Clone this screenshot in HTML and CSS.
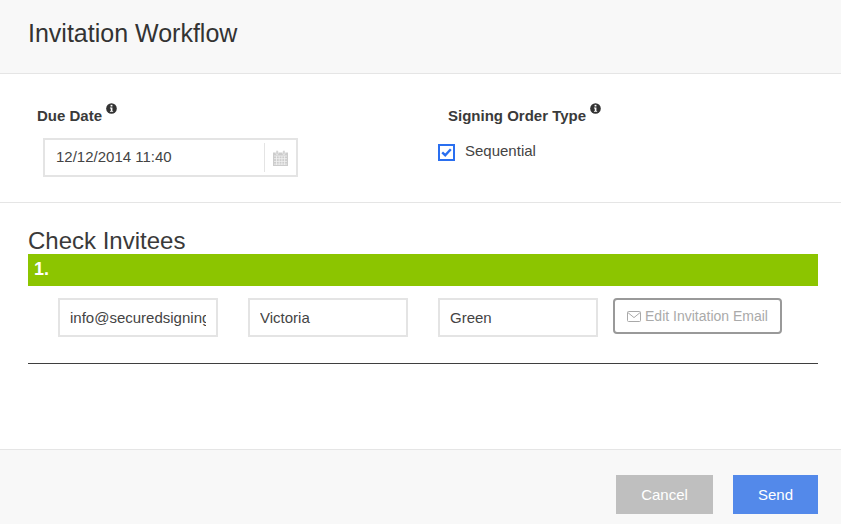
FILE: index.html
```html
<!DOCTYPE html>
<html lang="en">
<head>
<meta charset="utf-8">
<title>Invitation Workflow</title>
<link rel="stylesheet" href="styles.css">
</head>
<body>
<div class="modal">
  <header class="head"><h1 class="title">Invitation Workflow</h1></header>
  <section class="options">
    <div class="col col-date">
      <div class="label">Due Date<svg class="info" viewBox="0 0 12 12"><circle cx="6" cy="6" r="5.8" fill="#333"/><rect x="5" y="2" width="2" height="1.8" fill="#fff"/><path d="M4.3 5h2.7v3.6h.8v1H4.3v-1h.9V6h-.9z" fill="#fff"/></svg></div>
      <div class="date-box">
        <input class="date-val" value="12/12/2014 11:40">
        <span class="date-addon"><svg class="cal" viewBox="0 0 15 16"><path d="M0 2.5h15V16H0z" fill="#ccc"/><rect x="3" y="0.5" width="2.2" height="4" rx="1" fill="#ccc" stroke="#fff" stroke-width=".5"/><rect x="9.8" y="0.5" width="2.2" height="4" rx="1" fill="#ccc" stroke="#fff" stroke-width=".5"/><path d="M1 6h13M1 8.7h13M1 11.4h13M1 14.1h13M3.5 6v9M6.2 6v9M8.9 6v9M11.6 6v9" stroke="#f2f2f2" stroke-width=".8" fill="none"/></svg></span>
      </div>
    </div>
    <div class="col col-order">
      <div class="label">Signing Order Type<svg class="info" viewBox="0 0 12 12"><circle cx="6" cy="6" r="5.8" fill="#333"/><rect x="5" y="2" width="2" height="1.8" fill="#fff"/><path d="M4.3 5h2.7v3.6h.8v1H4.3v-1h.9V6h-.9z" fill="#fff"/></svg></div>
      <div class="check-row">
        <span class="check"><svg viewBox="0 0 11 9"><path d="M1.2 4.4l3 2.8 5.6-6" fill="none" stroke="#2a6ff0" stroke-width="2.4"/></svg></span>
        <span class="check-label">Sequential</span>
      </div>
    </div>
  </section>
  <section class="invitees">
    <h2 class="sub">Check Invitees</h2>
    <div class="bar">1.</div>
    <div class="row">
      <input class="field" value="info@securedsigning.com">
      <input class="field" value="Victoria">
      <input class="field" value="Green">
      <div class="edit"><svg class="env" viewBox="0 0 14 11"><rect x=".5" y=".5" width="13" height="10" rx="1" fill="none" stroke="#a9a9a9"/><path d="M.8 1.5L7 6.6l6.2-5.1" fill="none" stroke="#a9a9a9"/></svg>Edit Invitation Email</div>
    </div>
    <hr class="rule">
  </section>
  <footer class="foot">
    <div class="btn btn-cancel">Cancel</div>
    <div class="btn btn-send">Send</div>
  </footer>
</div>
</body>
</html>
```
FILE: styles.css
```css
* { box-sizing: border-box; }
html, body { margin: 0; padding: 0; }
body { background: #fff; color: #3f3f46; font-family: "Liberation Sans", Arial, sans-serif; font-size: 15px; }
input { font: inherit; outline: 0; }
.modal { width: 841px; height: 524px; display: flex; flex-direction: column; overflow: hidden; }
.head { height: 74px; background: #f8f8f8; border-bottom: 1px solid #e5e5e5; padding: 19px 28px 0; }
.title { margin: 0; font-size: 25px; font-weight: 400; line-height: 29px; color: #333; }
.options { height: 129px; border-bottom: 1px solid #e5e5e5; display: flex; }
.col-date { width: 411px; padding: 27px 0 0 37px; }
.col-order { padding: 27px 0 0 37px; }
.label { font-size: 15px; font-weight: 700; line-height: 30px; color: #3a3a3a; height: 30px; display: flex; align-items: flex-start; }
.info { width: 11px; height: 11px; margin: 2px 0 0 4px; flex: none; }
.date-box { margin: 7px 0 0 6px; width: 255px; height: 39px; border: 2px solid #e4e4e4; display: flex; align-items: center; justify-content: space-between; }
.date-val { border: 0; padding: 0 0 2px 11px; color: #444; width: 200px; background: none; }
.date-addon { width: 32px; height: 29px; border-left: 1px solid #e4e4e4; display: flex; align-items: center; justify-content: center; }
.cal { width: 15px; height: 16px; }
.check-row { display: flex; align-items: center; margin: 9px 0 0 -10px; height: 24px; }
.check { width: 17px; height: 17px; border: 2px solid #2a6ff0; display: flex; align-items: center; justify-content: center; }
.check svg { width: 11px; height: 9px; }
.check-label { margin-left: 10px; color: #444; position: relative; top: -2px; }
.invitees { flex: 1; padding: 0 23px 0 28px; }
.sub { margin: 0; padding-top: 25px; font-size: 24px; font-weight: 400; line-height: 26px; height: 51px; color: #3a3a3a; }
.bar { height: 32px; background: #8cc500; color: #fff; font-weight: 700; font-size: 18px; line-height: 31px; padding-left: 6px; }
.row { display: flex; align-items: flex-start; padding: 12px 0 0 30px; height: 77px; }
.field { width: 160px; height: 39px; border: 2px solid #e4e4e4; margin-right: 30px; padding: 0 10px; color: #444; }
.field:nth-child(3) { margin-right: 15px; }
.edit { width: 169px; height: 36px; border: 2px solid #999; border-radius: 4px; display: flex; align-items: center; justify-content: center; color: #aaa; font-size: 14px; }
.env { width: 14px; height: 11px; margin-right: 4px; }
.rule { margin: 0; border: 0; border-top: 1px solid #3f3f3f; height: 1px; }
.foot { height: 75px; background: #f8f8f8; border-top: 1px solid #e5e5e5; display: flex; justify-content: flex-end; padding: 25px 23px 0 0; gap: 20px; }
.btn { height: 39px; display: flex; align-items: center; justify-content: center; color: #fff; }
.btn-cancel { width: 97px; background: #bfbfbf; }
.btn-send { width: 85px; background: #5389ea; }
```
